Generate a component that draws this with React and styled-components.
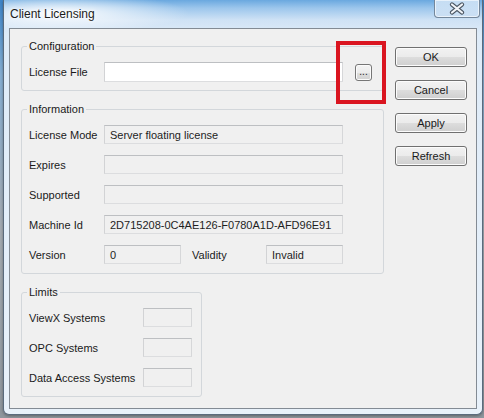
import React from 'react';
import styled, { createGlobalStyle } from 'styled-components';

const GlobalStyle = createGlobalStyle`
  html, body { margin: 0; padding: 0; }
  body {
    width: 484px;
    height: 418px;
    overflow: hidden;
    font-family: "Liberation Sans", Arial, sans-serif;
  }
`;

const Desktop = styled.div`
  width: 484px;
  height: 418px;
  box-sizing: border-box;
  padding-left: 3px;
  background: linear-gradient(180deg, #3d84c8 0%, #86afd3 18%, #a4abb2 55%, #8e969d 100%);
`;

const Window = styled.div`
  width: 480px;
  height: 415px;
  box-sizing: border-box;
  border: 1px solid #5a6b7d;
  border-top: none;
  border-radius: 0 0 6px 6px;
  display: flex;
  flex-direction: column;
  box-shadow: 0 1px 3px rgba(0, 0, 0, 0.35);
  background:
    radial-gradient(ellipse 130px 20px at 55px 13px, rgba(255, 255, 255, 0.95), rgba(255, 255, 255, 0) 100%),
    linear-gradient(180deg, #6aa8df 0px, #9cc6ec 8px, #cfe2f5 20px, #deebf8 34px, #e8f1fa 100%);
`;

const TitleBar = styled.div`
  height: 28px;
  flex: none;
  display: flex;
  align-items: flex-start;
  justify-content: space-between;
  padding-left: 6px;
`;

const Title = styled.span`
  margin-top: 7px;
  font-size: 12px;
  line-height: 15px;
  color: #1b1b1b;
  text-shadow: 0 0 6px #fff, 0 0 3px #fff;
`;

const CloseButton = styled.div`
  width: 46px;
  height: 18px;
  box-sizing: border-box;
  margin-right: 2px;
  border: 1px solid #74879b;
  border-top: none;
  border-radius: 0 0 4px 4px;
  display: flex;
  align-items: center;
  justify-content: center;
  background: linear-gradient(180deg, rgba(228, 239, 250, 0.75) 0%, rgba(205, 224, 244, 0.7) 100%);
  box-shadow: inset 0 0 0 1px rgba(255, 255, 255, 0.6);
`;

const FrameBody = styled.div`
  flex: 1;
  display: flex;
  padding: 0 5px 5px;
`;

const Client = styled.div`
  flex: 1;
  position: relative;
  border: 1px solid #838b94;
  background: #f0f0f0;
  display: grid;
  grid-template-columns: 363px 72px;
  column-gap: 11px;
  align-items: start;
  padding: 10px 0 0 11px;
  color: #1a1a1a;
  font-size: 11px;
`;

const GroupColumn = styled.div`
  display: flex;
  flex-direction: column;
  gap: 11px;
`;

const Group = styled.fieldset`
  margin: 0;
  min-width: 0;
  box-sizing: border-box;
  width: ${p => p.$width}px;
  border: 1px solid #d3d7db;
  border-radius: 3px;
  padding: 9px 7px ${p => p.$bottom}px;
  display: flex;
  flex-direction: column;
  gap: 11px;
`;

const Legend = styled.legend`
  font-size: 11px;
  line-height: 14px;
  padding: 0 2px;
  margin-left: -2px;
  color: #1a1a1a;
`;

const Row = styled.div`
  display: flex;
  align-items: center;
  height: ${p => p.$h || 19}px;
`;

const Label = styled.span`
  flex: none;
  width: ${p => p.$w}px;
  margin-left: ${p => p.$gap || 0}px;
  padding-top: 1px;
  white-space: nowrap;
  line-height: 13px;
`;

const Field = styled.div`
  flex: none;
  width: ${p => p.$w}px;
  height: ${p => p.$h || 19}px;
  box-sizing: border-box;
  padding: 1px 0 0 5px;
  border: 1px solid;
  border-color: #bdbfc2 #d6d7d9 #dcdddf #d2d3d5;
  background: ${p => (p.$editable ? '#ffffff' : '#f0f0f0')};
  line-height: ${p => (p.$h || 19) - 3}px;
  white-space: nowrap;
  overflow: hidden;
  color: #1e1e1e;
`;

const BrowseButton = styled.button`
  flex: none;
  width: 17px;
  height: 17px;
  margin-left: 12px;
  padding: 0 0 3px;
  box-sizing: border-box;
  border: 1px solid #767676;
  border-radius: 3px;
  background: linear-gradient(180deg, #f4f4f4 0%, #ececec 50%, #dedede 51%, #d2d2d2 100%);
  box-shadow: inset 0 0 0 1px #fbfbfb;
  font-family: inherit;
  font-size: 10px;
  line-height: 10px;
  color: #222;
  display: flex;
  align-items: flex-end;
  justify-content: center;
`;

const ButtonColumn = styled.div`
  display: flex;
  flex-direction: column;
  gap: 13px;
  padding-top: 8px;
`;

const DialogButton = styled.button`
  width: 72px;
  height: 20px;
  box-sizing: border-box;
  padding: 0;
  border: 1px solid #707070;
  border-radius: 3px;
  background: linear-gradient(180deg, #f2f2f2 0%, #ebebeb 50%, #dddddd 51%, #cfcfcf 100%);
  box-shadow: inset 0 0 0 1px #fcfcfc;
  font-family: inherit;
  font-size: 11px;
  line-height: 18px;
  color: #1a1a1a;
`;

const Callout = styled.div`
  position: absolute;
  left: 326px;
  top: 12px;
  width: 50px;
  height: 63px;
  box-sizing: border-box;
  border: 4px solid #da1520;
  pointer-events: none;
`;

const CloseGlyph = () => (
  <svg width="18" height="13" viewBox="0 0 18 13">
    <path d="M4 2.5 L14 10.5 M14 2.5 L4 10.5" stroke="#4a5562" strokeWidth="4.2" strokeLinecap="round" fill="none" />
    <path d="M4 2.5 L14 10.5 M14 2.5 L4 10.5" stroke="#f2f5f9" strokeWidth="2.2" strokeLinecap="round" fill="none" />
  </svg>
);

const infoRows = [
  { label: 'License Mode', value: 'Server floating license' },
  { label: 'Expires', value: '' },
  { label: 'Supported', value: '' },
  { label: 'Machine Id', value: '2D715208-0C4AE126-F0780A1D-AFD96E91' },
];

const limitRows = ['ViewX Systems', 'OPC Systems', 'Data Access Systems'];

export default function App() {
  return (
    <>
      <GlobalStyle />
      <Desktop>
        <Window>
          <TitleBar>
            <Title>Client Licensing</Title>
            <CloseButton>
              <CloseGlyph />
            </CloseButton>
          </TitleBar>
          <FrameBody>
            <Client>
              <GroupColumn>
                <Group $width={363} $bottom={8}>
                  <Legend>Configuration</Legend>
                  <Row $h={20}>
                    <Label $w={75}>License File</Label>
                    <Field $w={239} $h={20} $editable />
                    <BrowseButton>...</BrowseButton>
                  </Row>
                </Group>

                <Group $width={363} $bottom={9}>
                  <Legend>Information</Legend>
                  {infoRows.map(r => (
                    <Row key={r.label}>
                      <Label $w={75}>{r.label}</Label>
                      <Field $w={239}>{r.value}</Field>
                    </Row>
                  ))}
                  <Row>
                    <Label $w={75}>Version</Label>
                    <Field $w={77}>0</Field>
                    <Label $w={74} $gap={11}>Validity</Label>
                    <Field $w={77}>Invalid</Field>
                  </Row>
                </Group>

                <Group $width={181} $bottom={9}>
                  <Legend>Limits</Legend>
                  {limitRows.map(name => (
                    <Row key={name}>
                      <Label $w={114}>{name}</Label>
                      <Field $w={49} />
                    </Row>
                  ))}
                </Group>
              </GroupColumn>

              <ButtonColumn>
                <DialogButton>OK</DialogButton>
                <DialogButton>Cancel</DialogButton>
                <DialogButton>Apply</DialogButton>
                <DialogButton>Refresh</DialogButton>
              </ButtonColumn>

              <Callout />
            </Client>
          </FrameBody>
        </Window>
      </Desktop>
    </>
  );
}
